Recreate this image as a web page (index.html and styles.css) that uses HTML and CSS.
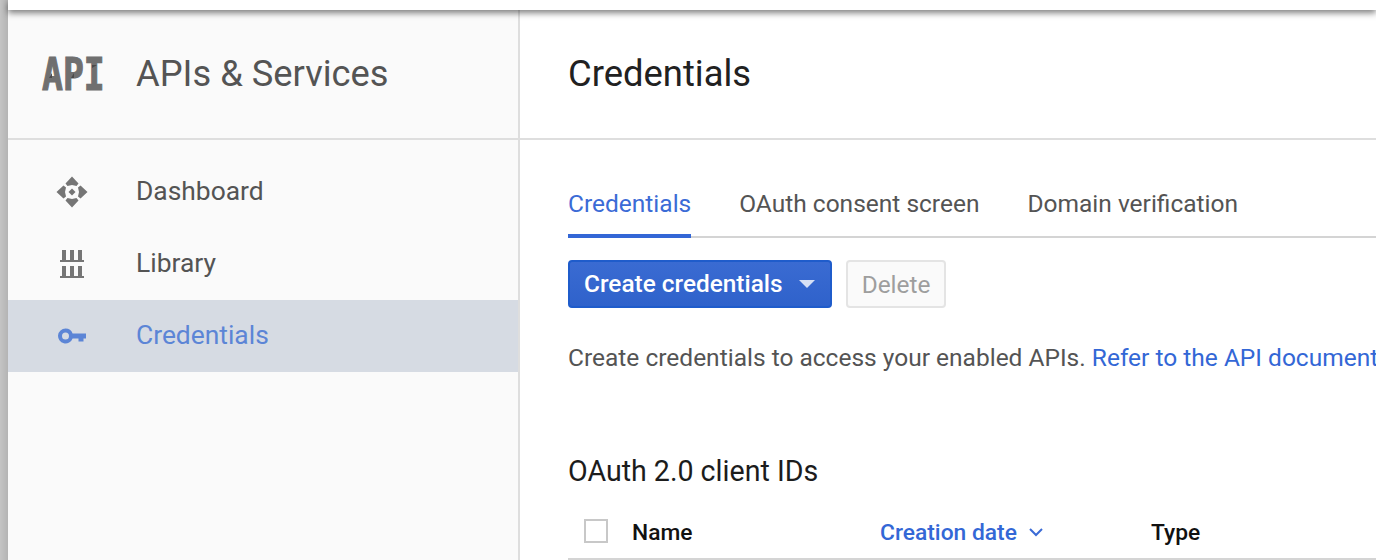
FILE: index.html
```html
<!DOCTYPE html>
<html lang="en">
<head>
<meta charset="utf-8">
<title>Credentials</title>
<link rel="stylesheet" href="styles.css">
</head>
<body>
<div class="edge"></div>
<div class="window">
  <div class="topbar"></div>
  <div class="columns">
    <aside class="sidebar">
      <div class="side-head">
        <svg class="api-logo" width="64" height="34" viewBox="0 0 64 34">
          <text transform="translate(1 33) scale(1.02 1.3)" font-size="34">API</text>
          <path class="logo-shade" d="M8 21L11 16V21ZM30 21L33 16V21ZM51 11L56 8H51Z"/>
        </svg>
        <span class="side-title">APIs &amp; Services</span>
      </div>
      <nav class="nav">
        <a class="nav-item">
          <span class="nav-icon">
            <svg width="32" height="32" viewBox="0 0 32 32"><path class="ico" d="M16 0.500L22.500 7.500 20.500 10 16 9 11.500 10 9.500 7.500Z"/><path class="ico" d="M16 31.500L22.500 24.500 20.500 22 16 23 11.500 22 9.500 24.500Z"/><path class="ico" d="M0.500 16L7.500 9.500 10 11.500 9 16 10 20.500 7.500 22.500Z"/><path class="ico" d="M31.500 16L24.500 9.500 22 11.500 23 16 22 20.500 24.500 22.500Z"/><path class="ico" d="M16 12.500L19.500 16 16 19.500 12.500 16Z"/></svg>
          </span>
          <span class="nav-label">Dashboard</span>
        </a>
        <a class="nav-item">
          <span class="nav-icon">
            <svg width="24" height="28" viewBox="0 0 24 28"><path class="ico" d="M0 10H24V12H0ZM0 26H24V28H0ZM2 0H6V10H2ZM10 0H14V10H10ZM18 0H22V10H18ZM2 16H6V26H2ZM10 16H14V26H10ZM18 16H22V26H18Z"/></svg>
          </span>
          <span class="nav-label">Library</span>
        </a>
        <a class="nav-item active">
          <span class="nav-icon">
            <svg width="28" height="16" viewBox="0 0 28 16"><path class="ico-active" fill-rule="evenodd" d="M7.500 0.500A7.500 7.500 0 0 1 14.600 5.500H28V10.500H25.500V13.500H20.500V10.500H14.600A7.500 7.500 0 1 1 7.500 0.500ZM7.500 4.500A3.500 3.500 0 1 0 7.500 11.500 3.500 3.500 0 0 0 7.500 4.500Z"/></svg>
          </span>
          <span class="nav-label">Credentials</span>
        </a>
      </nav>
    </aside>
    <main class="main">
      <header class="main-head"><h1>Credentials</h1></header>
      <div class="content">
        <div class="tabs">
          <a class="tab selected">Credentials</a>
          <a class="tab">OAuth consent screen</a>
          <a class="tab">Domain verification</a>
        </div>
        <div class="actions">
          <button class="btn-primary"><span class="btn-label">Create credentials</span><i class="caret"></i></button>
          <button class="btn-disabled">Delete</button>
        </div>
        <p class="intro">Create credentials to access your enabled APIs. <a>Refer to the API documentation</a> for details.</p>
        <h2>OAuth 2.0 client IDs</h2>
        <div class="table-head">
          <span class="checkbox"></span>
          <span class="col col-name">Name</span>
          <span class="col col-date">Creation date
            <svg width="14" height="9" viewBox="0 0 14 9"><path d="M1 1L7 7 13 1" fill="none" stroke="#3b6bd6" stroke-width="2"/></svg>
          </span>
          <span class="col">Type</span>
        </div>
      </div>
    </main>
  </div>
</div>
</body>
</html>
```
FILE: styles.css
```css
* { box-sizing: border-box; }
html, body { margin: 0; height: 100%; overflow: hidden; }
body {
  display: flex;
  font-family: Roboto, "Liberation Sans", sans-serif;
  background: #fff;
  color: #212121;
  width: 1376px;
  height: 560px;
}
.edge {
  width: 8px;
  flex: none;
  background: linear-gradient(to right, #c4c4c4, #b4b4b4);
}
.window { flex: 1; min-width: 0; display: flex; flex-direction: column; }
.topbar {
  height: 10px;
  flex: none;
  background: #fff;
  box-shadow: 0 3px 6px rgba(0, 0, 0, .5);
  position: relative;
}
.columns { flex: 1; display: flex; min-height: 0; }
.sidebar {
  width: 512px;
  flex: none;
  background: #fafafa;
  border-right: 2px solid #dedede;
}
.side-head {
  height: 130px;
  border-bottom: 2px solid #dedede;
  display: flex;
  align-items: center;
  padding-left: 33px;
}
.api-logo { flex: none; margin-right: 31px; overflow: visible; }
.api-logo text {
  font-family: "DejaVu Sans Mono", monospace;
  font-weight: 700;
  fill: #6f6f6f;
  stroke: #6f6f6f;
  stroke-width: .9;
}
.logo-shade { fill: #4a4a4a; }
.side-title { font-size: 36.300px; color: #545454; white-space: nowrap; padding-bottom: 2px; }
.nav { padding-top: 16px; }
.nav-item {
  height: 72px;
  display: flex;
  align-items: center;
  font-size: 26.400px;
  color: #545454;
}
.nav-label { padding-bottom: 2px; }
.nav-icon {
  width: 128px;
  flex: none;
  display: flex;
  justify-content: center;
}
.ico { fill: #757575; }
.ico-active { fill: #5c85d6; }
.nav-item.active { background: #d6dbe3; color: #5c85d6; }
.main { flex: 1; min-width: 0; overflow: hidden; }
.main-head {
  height: 130px;
  border-bottom: 2px solid #dedede;
  display: flex;
  align-items: center;
  padding-left: 48px;
}
h1 { margin: 0 0 2px; font-size: 36.400px; font-weight: 400; color: #212121; white-space: nowrap; }
.content { padding: 32px 0 0 48px; white-space: nowrap; }
.tabs {
  display: flex;
  gap: 48px;
  height: 66px;
  border-bottom: 2px solid #d4d4d4;
}
.tab {
  height: 66px;
  display: flex;
  align-items: center;
  font-size: 24.500px;
  color: #545454;
  border-bottom: 4px solid transparent;
}
.tab.selected { color: #3b6bd6; border-bottom-color: #3367d6; }
.actions { display: flex; gap: 14px; margin-top: 22px; }
button {
  font-family: inherit;
  font-size: 24.400px;
  height: 48px;
  border-radius: 4px;
  padding: 0;
}
.btn-primary {
  width: 264px;
  display: flex;
  align-items: center;
  gap: 16px;
  padding-left: 14px;
  font-weight: 500;
  color: #fff;
  background: linear-gradient(#3a6bd2, #2f62cb);
  border: 2px solid #1f5ccb;
}
.btn-label { padding-bottom: 2px; }
.caret {
  width: 0;
  height: 0;
  border-left: 8px solid transparent;
  border-right: 8px solid transparent;
  border-top: 8px solid #d6e0f5;
}
.btn-disabled {
  width: 100px;
  color: #9e9e9e;
  background: #fafafa;
  border: 2px solid #e4e4e4;
}
.intro { margin: 34px 0 0; font-size: 24.500px; line-height: 32px; color: #545454; }
.intro a { color: #3367d6; }
h2 { margin: 80px 0 0; font-size: 28.600px; line-height: 34px; font-weight: 400; color: #1c1c1c; }
.table-head {
  display: flex;
  align-items: center;
  height: 56px;
  margin-top: 16px;
  border-bottom: 2px solid #d4d4d4;
  padding-left: 16px;
  font-size: 22.800px;
}
.checkbox {
  width: 24px;
  height: 24px;
  flex: none;
  margin-right: 24px;
  background: #fff;
  border: 2px solid #c8c8c8;
}
.col { font-weight: 500; color: #111; padding-top: 2px; }
.col-name { width: 248px; flex: none; }
.col-date { width: 271px; flex: none; color: #3367d6; display: flex; align-items: center; gap: 12px; }
```
